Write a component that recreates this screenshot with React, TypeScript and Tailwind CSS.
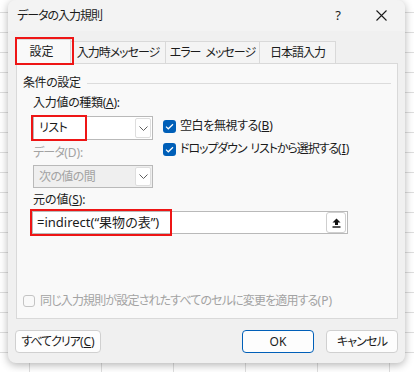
import React from "react";

const font = "font-['Noto_Sans','Noto_Sans_CJK_JP',sans-serif] [font-feature-settings:'palt']";

const Chevron = () => (
  <svg width="9" height="5" viewBox="0 0 9 5" fill="none">
    <path d="M0.5 0.5L4.5 4.5L8.5 0.5" stroke="#5f5f5f" strokeWidth="1" />
  </svg>
);

const Check = () => (
  <span className="flex h-[13px] w-[13px] shrink-0 items-center justify-center rounded-[3px] bg-[#005fb8]">
    <svg width="9" height="7" viewBox="0 0 9 7" fill="none">
      <path d="M1 3.6L3.3 5.8L8 1.2" stroke="white" strokeWidth="1.2" />
    </svg>
  </span>
);

const Select = ({ value, disabled }: { value: string; disabled?: boolean }) => (
  <div
    className={`flex w-[120px] items-stretch border border-[#b9b9b9] ${
      disabled ? "h-[23px] bg-[#efefef]" : "h-[24px] bg-white"
    }`}
  >
    <span className={`flex flex-1 items-center pl-[5px] tracking-[-0.6px] ${disabled ? "text-[#a3a3a3]" : ""}`}>{value}</span>
    <span className="m-px flex w-[16px] items-center justify-center rounded-[2px] border border-[#dedede] bg-white">
      <Chevron />
    </span>
  </div>
);

const Tab = ({ label, w, active }: { label: React.ReactNode; w: string; active?: boolean }) =>
  active ? (
    <div className={`relative z-10 -mb-px flex h-[25px] items-center justify-center border border-b-0 border-[#d9d9d9] bg-[#f9f9f9] pr-[4px] ${w}`}>
      {label}
      <span className="absolute -left-[2px] -top-[3px] h-[28px] w-[59px] border-2 border-[#ee1515]" />
    </div>
  ) : (
    <div className={`flex h-[22px] items-center justify-center border border-l-0 border-b-0 border-[#d9d9d9] bg-[#f4f4f4] tracking-[-1px] ${w}`}>
      {label}
    </div>
  );

const Button = ({ children, w, primary }: { children: React.ReactNode; w: string; primary?: boolean }) => (
  <div
    className={`flex h-[23px] items-center justify-center rounded-[4px] border bg-[#fdfdfd] ${w} ${
      primary ? "border-[#005fb8]" : "border-[#d0d0d0]"
    }`}
  >
    {children}
  </div>
);

export default function App() {
  return (
    <div
      className={`h-[372px] w-[414px] overflow-hidden bg-white bg-[linear-gradient(to_bottom,transparent_19px,#dedede_19px,#dedede_20px),linear-gradient(to_right,transparent_71px,#dedede_71px,#dedede_72px)] bg-[length:72px_20px] bg-[position:-42px_-7px] pl-[8px] pt-0 text-[12px] text-[#1b1b1b] ${font}`}
    >
      <div className="flex h-[363px] w-[397px] flex-col overflow-hidden rounded-b-[8px] rounded-t-[8px] bg-[#f0f0f0] shadow-[0_2px_8px_rgba(0,0,0,0.3)]">
        {/* title bar */}
        <div className="flex h-[31px] items-center bg-[#f3f3f3]">
          <span className="pl-[9px] tracking-[-1px]">データの入力規則</span>
          <span className="ml-auto flex w-[30px] justify-center text-[13px]">?</span>
          <span className="ml-[5px] flex w-[47px] justify-center">
            <svg width="11" height="11" viewBox="0 0 11 11" fill="none">
              <path d="M0.5 0.5L10.5 10.5M10.5 0.5L0.5 10.5" stroke="#1b1b1b" strokeWidth="1.1" />
            </svg>
          </span>
        </div>

        {/* tabs */}
        <div className="flex h-[32px] items-end pl-[8px]">
          <Tab label="設定" w="w-[55px]" active />
          <Tab label="入力時メッセージ" w="w-[95px]" />
          <Tab
            label={
              <>
                エラー<span className="ml-[5px]">メッセージ</span>
              </>
            }
            w="w-[94px]"
          />
          <Tab label="日本語入力" w="w-[76px]" />
        </div>

        {/* panel */}
        <div className="ml-[8px] h-[256px] w-[382px] border border-[#d9d9d9] bg-[#f9f9f9]">
          <div className="mt-[11px] flex h-[16px] items-center pl-[6px]">
            <span className="tracking-[-0.4px]">条件の設定</span>
            <span className="ml-[6px] mr-[6px] h-px flex-1 bg-[#dcdcdc]" />
          </div>

          <div className="mt-[4px] flex pl-[16px]">
            <div className="flex w-[120px] flex-col">
              <span className="h-[16px] leading-[16px] tracking-[-0.3px]">
                入力値の種類(<span className="underline">A</span>):
              </span>
              <div className="relative mt-[5px]">
                <Select value="リスト" />
                <span className="absolute -left-[2px] -top-[1px] h-[26px] w-[56px] border-2 border-[#ee1515]" />
              </div>
              <span className="mt-[5px] h-[16px] leading-[16px] text-[#a3a3a3]">
                <span className="tracking-[-0.8px]">データ</span>(D):
              </span>
              <div className="mt-[4px]">
                <Select value="次の値の間" disabled />
              </div>
            </div>
            <div className="ml-[10px] flex flex-col pt-[23px]">
              <div className="flex h-[16px] items-center gap-[4px]">
                <Check />
                <span>
                  <span className="tracking-[-0.4px]">空白を無視する</span>(<span className="underline">B</span>)
                </span>
              </div>
              <div className="mt-[7px] flex h-[16px] items-center gap-[4px]">
                <Check />
                <span>
                  <span className="tracking-[-1.1px]">ドロップダウン</span>
                  <span className="ml-[4px] tracking-[-1.1px]">リストから選択する</span>(<span className="underline">I</span>)
                </span>
              </div>
            </div>
          </div>

          <div className="mt-[4px] h-[16px] pl-[16px] leading-[16px]">
            元の値(<span className="underline">S</span>):
          </div>
          <div className="relative ml-[15px] mt-[3px] flex h-[23px] w-[316px] items-center border border-[#b9b9b9] bg-white">
            <span className="flex-1 pl-[4px] text-[13px]">=indirect(“果物の表”)</span>
            <span className="mr-px flex h-[21px] w-[20px] items-center justify-center rounded-[3px] border border-[#cfcfcf] bg-white">
              <svg width="9" height="10" viewBox="0 0 9 10" fill="none">
                <path d="M4.5 0.5L8.5 4.5H6V7H3V4.5H0.5Z" fill="#111" />
                <rect x="0.5" y="8.3" width="8" height="1.4" fill="#111" />
              </svg>
            </span>
            <span className="absolute -left-[3px] -top-[3px] h-[27px] w-[142px] border-2 border-[#ee1515]" />
          </div>

          <div className="mt-[59px] flex h-[16px] items-center gap-[5px] pl-[6px] text-[#a3a3a3]">
            <span className="h-[12px] w-[12px] rounded-[3px] border border-[#c4c4c4] bg-[#f9f9f9]" />
            <span>
              <span className="tracking-[-0.85px]">同じ入力規則が設定されたすべてのセルに変更を適用する</span>(P)
            </span>
          </div>
        </div>

        {/* buttons */}
        <div className="mt-[11px] flex pl-[7px] pr-[7px]">
          <Button w="w-[86px]">
            <span className="tracking-[-1px]">すべてクリア</span>(<span className="underline">C</span>)
          </Button>
          <div className="ml-auto flex gap-[12px]">
            <Button w="w-[72px]" primary>
              OK
            </Button>
            <Button w="w-[72px]">
              <span className="tracking-[-0.8px]">キャンセル</span>
            </Button>
          </div>
        </div>
      </div>
    </div>
  );
}
